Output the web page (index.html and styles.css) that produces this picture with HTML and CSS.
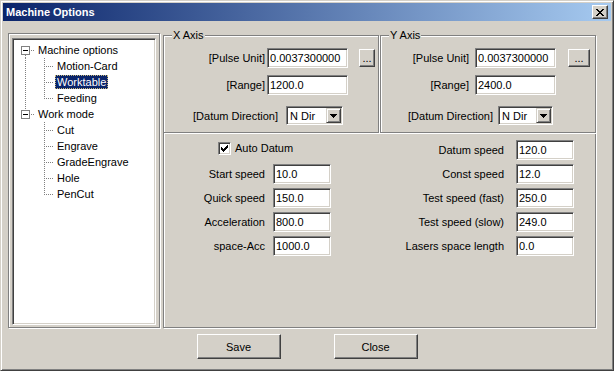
FILE: index.html
```html
<!DOCTYPE html>
<html lang="en">
<head>
    <meta charset="UTF-8">
    <title>Machine Options</title>
    <link rel="stylesheet" href="styles.css">
</head>
<body>
    <div class="window">
        <div class="titlebar">
            <span class="title">Machine Options</span>
            <span class="close-btn">
                <svg width="8" height="7" viewBox="0 0 8 7" shape-rendering="crispEdges"><path fill="#000" d="M0 0h2v1H0z M6 0h2v1H6z M1 1h2v1H1z M5 1h2v1H5z M2 2h4v1H2z M3 3h2v1H3z M2 4h4v1H2z M1 5h2v1H1z M5 5h2v1H5z M0 6h2v1H0z M6 6h2v1H6z"/></svg>
            </span>
        </div>

        <div class="content">
            <div class="main">
                <div class="tree-frame">
                    <div class="tree">
                        <div class="row">
                            <span class="cell"><span class="hl"></span><span class="vb"></span><span class="box"></span></span>
                            <span class="label">Machine options</span>
                        </div>
                        <div class="row">
                            <span class="cell"><span class="vl"></span></span>
                            <span class="cell"><span class="vl"></span><span class="hl"></span></span>
                            <span class="label">Motion-Card</span>
                        </div>
                        <div class="row">
                            <span class="cell"><span class="vl"></span></span>
                            <span class="cell"><span class="vl"></span><span class="hl"></span></span>
                            <span class="label selected">Worktable</span>
                        </div>
                        <div class="row">
                            <span class="cell"><span class="vl"></span></span>
                            <span class="cell"><span class="vt"></span><span class="hl"></span></span>
                            <span class="label">Feeding</span>
                        </div>
                        <div class="row">
                            <span class="cell"><span class="hl"></span><span class="vr"></span><span class="box"></span></span>
                            <span class="label">Work mode</span>
                        </div>
                        <div class="row">
                            <span class="cell"></span>
                            <span class="cell"><span class="vl"></span><span class="hl"></span></span>
                            <span class="label">Cut</span>
                        </div>
                        <div class="row">
                            <span class="cell"></span>
                            <span class="cell"><span class="vl"></span><span class="hl"></span></span>
                            <span class="label">Engrave</span>
                        </div>
                        <div class="row">
                            <span class="cell"></span>
                            <span class="cell"><span class="vl"></span><span class="hl"></span></span>
                            <span class="label">GradeEngrave</span>
                        </div>
                        <div class="row">
                            <span class="cell"></span>
                            <span class="cell"><span class="vl"></span><span class="hl"></span></span>
                            <span class="label">Hole</span>
                        </div>
                        <div class="row">
                            <span class="cell"></span>
                            <span class="cell"><span class="vt"></span><span class="hl"></span></span>
                            <span class="label">PenCut</span>
                        </div>
                    </div>
                </div>

                <div class="settings">
                    <div class="axes">
                        <div class="group x-axis">
                            <span class="legend">X Axis</span>
                            <div class="axis-row">
                                <span class="lbl lbl-pulse">[Pulse Unit]</span>
                                <input class="field field-pulse" type="text" value="0.0037300000">
                                <button class="btn btn-dots">...</button>
                            </div>
                            <div class="axis-row row-range">
                                <span class="lbl lbl-pulse">[Range]</span>
                                <input class="field field-pulse" type="text" value="1200.0">
                            </div>
                            <div class="axis-row row-dir">
                                <span class="lbl lbl-dir">[Datum Direction]</span>
                                <div class="combo">
                                    <span>N Dir</span>
                                    <span class="drop"><svg width="7" height="4" viewBox="0 0 7 4" shape-rendering="crispEdges"><path fill="#000" d="M0 0h7v1H0z M1 1h5v1H1z M2 2h3v1H2z M3 3h1v1H3z"/></svg></span>
                                </div>
                            </div>
                        </div>
                        <div class="group y-axis">
                            <span class="legend">Y Axis</span>
                            <div class="axis-row">
                                <span class="lbl lbl-pulse">[Pulse Unit]</span>
                                <input class="field field-pulse" type="text" value="0.0037300000">
                                <button class="btn btn-dots">...</button>
                            </div>
                            <div class="axis-row row-range">
                                <span class="lbl lbl-pulse">[Range]</span>
                                <input class="field field-pulse" type="text" value="2400.0">
                            </div>
                            <div class="axis-row row-dir">
                                <span class="lbl lbl-dir">[Datum Direction]</span>
                                <div class="combo">
                                    <span>N Dir</span>
                                    <span class="drop"><svg width="7" height="4" viewBox="0 0 7 4" shape-rendering="crispEdges"><path fill="#000" d="M0 0h7v1H0z M1 1h5v1H1z M2 2h3v1H2z M3 3h1v1H3z"/></svg></span>
                                </div>
                            </div>
                        </div>
                    </div>

                    <div class="motion">
                        <div class="auto-datum">
                            <span class="check">
                                <svg width="7" height="7" viewBox="0 0 7 7" shape-rendering="crispEdges"><path fill="#000" d="M6 0h1v1H6z M5 1h2v1H5z M0 2h1v1H0z M4 2h3v1H4z M0 3h2v1H0z M3 3h3v1H3z M0 4h5v1H0z M1 5h3v1H1z M2 6h1v1H2z"/></svg>
                            </span>
                            <span>Auto Datum</span>
                        </div>
                        <span class="lbl-r">Datum speed</span>
                        <input class="field field-num" type="text" value="120.0">

                        <span class="lbl-l">Start speed</span>
                        <input class="field field-num" type="text" value="10.0">
                        <span class="lbl-r">Const speed</span>
                        <input class="field field-num" type="text" value="12.0">

                        <span class="lbl-l">Quick speed</span>
                        <input class="field field-num" type="text" value="150.0">
                        <span class="lbl-r">Test speed (fast)</span>
                        <input class="field field-num" type="text" value="250.0">

                        <span class="lbl-l">Acceleration</span>
                        <input class="field field-num" type="text" value="800.0">
                        <span class="lbl-r">Test speed (slow)</span>
                        <input class="field field-num" type="text" value="249.0">

                        <span class="lbl-l">space-Acc</span>
                        <input class="field field-num" type="text" value="1000.0">
                        <span class="lbl-r">Lasers space length</span>
                        <input class="field field-num" type="text" value="0.0">
                    </div>
                </div>
            </div>

            <div class="actions">
                <button class="btn btn-action">Save</button>
                <button class="btn btn-action">Close</button>
            </div>
        </div>
    </div>
</body>
</html>
```

FILE: styles.css
```css
* {
    box-sizing: border-box;
}

body {
    margin: 0;
    background: #d4d0c8;
    font-family: "Liberation Sans", Arial, sans-serif;
    font-size: 11px;
    color: #000;
}

.window {
    width: 614px;
    height: 371px;
    padding: 2px;
    background: #d4d0c8;
    border: 1px solid;
    border-color: #d4d0c8 #404040 #404040 #d4d0c8;
    box-shadow: inset 1px 1px #fff, inset -1px -1px #808080;
}

.titlebar {
    height: 18px;
    display: flex;
    align-items: center;
    justify-content: space-between;
    padding: 0 3px 0 3px;
    background: linear-gradient(to right, #0a246a, #a6caf0);
}

.title {
    color: #fff;
    font-weight: bold;
    font-size: 11px;
}

.close-btn {
    width: 16px;
    height: 14px;
    display: flex;
    align-items: center;
    justify-content: center;
    background: #d4d0c8;
    border: 1px solid;
    border-color: #fff #404040 #404040 #fff;
    box-shadow: inset -1px -1px #808080;
}

.content {
    padding: 12px 5px 0 5px;
}

.main {
    display: flex;
    height: 295px;
}

/* tree */

.tree-frame {
    width: 152px;
    height: 295px;
    padding: 4px 3px 2px 3px;
    border: 1px solid #808080;
    box-shadow: inset 1px 1px #fff, 1px 1px #fff;
}

.tree {
    height: 100%;
    padding: 3px 0 0 3px;
    background: #fff;
    border: 1px solid;
    border-color: #808080 #fff #fff #808080;
    box-shadow: inset 1px 1px #404040, inset -1px -1px #d4d0c8;
}

.row {
    display: flex;
    align-items: center;
    height: 16px;
}

.cell {
    position: relative;
    flex: none;
    width: 19px;
    height: 16px;
}

.vl, .vt, .vb, .vr {
    position: absolute;
    left: 9px;
    width: 1px;
    background: repeating-linear-gradient(#808080 0 1px, transparent 1px 2px);
}

.vl {
    top: 0;
    height: 16px;
}

.vt {
    top: 0;
    height: 9px;
}

.vb {
    top: 13px;
    height: 3px;
}

.vr {
    top: 0;
    height: 4px;
}

.hl {
    position: absolute;
    left: 9px;
    top: 8px;
    width: 10px;
    height: 1px;
    background: repeating-linear-gradient(to right, #808080 0 1px, transparent 1px 2px);
}

.box {
    position: absolute;
    left: 5px;
    top: 4px;
    width: 9px;
    height: 9px;
    background: #fff;
    border: 1px solid #808080;
}

.box::after {
    content: "";
    position: absolute;
    left: 1px;
    top: 3px;
    width: 5px;
    height: 1px;
    background: #000;
}

.label {
    margin-left: 1px;
    padding: 0 2px;
    height: 14px;
    line-height: 14px;
    white-space: nowrap;
}

.label.selected {
    background: #0a246a;
    color: #fff;
    outline: 1px dotted #c8b878;
    outline-offset: -1px;
}

/* axis groups */

.settings {
    display: flex;
    flex-direction: column;
    width: 433px;
    margin: 2px 0 0 3px;
}

.axes {
    display: flex;
    gap: 1px;
}

.group {
    position: relative;
    width: 216px;
    height: 98px;
    padding-top: 12px;
    border: 1px solid #808080;
    box-shadow: inset 1px 1px #fff, 1px 1px #fff;
}

.legend {
    position: absolute;
    top: -7px;
    left: 8px;
    padding: 0 1px;
    line-height: 13px;
    background: #d4d0c8;
}

.axis-row {
    display: flex;
    align-items: center;
    height: 20px;
}

.row-range {
    margin-top: 7px;
}

.row-dir {
    margin-top: 11px;
    height: 19px;
}

.lbl {
    text-align: right;
    white-space: nowrap;
}

.x-axis .lbl-pulse {
    width: 101px;
    margin-right: 2px;
}

.x-axis .lbl-dir {
    width: 114px;
    margin-right: 8px;
}

.y-axis .lbl-pulse {
    width: 88px;
    margin-right: 6px;
}

.y-axis .lbl-dir {
    width: 112px;
    margin-right: 5px;
}

.field {
    height: 20px;
    margin: 0;
    padding: 0 2px;
    font: inherit;
    color: #000;
    background: #fff;
    border: 1px solid;
    border-color: #808080 #fff #fff #808080;
    box-shadow: inset 1px 1px #404040, inset -1px -1px #d4d0c8;
    outline: none;
}

.field-pulse {
    width: 81px;
}

.btn {
    margin: 0;
    padding: 0;
    font: inherit;
    color: #000;
    background: #d4d0c8;
    border: 1px solid;
    border-color: #fff #404040 #404040 #fff;
    box-shadow: inset -1px -1px #808080;
}

.btn-dots {
    height: 18px;
    line-height: 14px;
}

.x-axis .btn-dots {
    width: 16px;
    margin-left: 11px;
}

.y-axis .btn-dots {
    width: 22px;
    margin-left: 12px;
}

.combo {
    display: flex;
    align-items: center;
    height: 19px;
    padding: 2px 2px 2px 3px;
    background: #fff;
    border: 1px solid;
    border-color: #808080 #fff #fff #808080;
    box-shadow: inset 1px 1px #404040, inset -1px -1px #d4d0c8;
}

.x-axis .combo {
    width: 57px;
}

.y-axis .combo {
    width: 55px;
}

.drop {
    display: flex;
    align-items: center;
    justify-content: center;
    width: 15px;
    height: 15px;
    margin-left: auto;
    margin-right: -1px;
    margin-top: -1px;
    margin-bottom: -1px;
    background: #d4d0c8;
    border: 1px solid;
    border-color: #d4d0c8 #404040 #404040 #d4d0c8;
    box-shadow: inset 1px 1px #fff, inset -1px -1px #808080;
}

/* motion panel */

.motion {
    display: grid;
    grid-template-columns: 109px 58px 185px 58px;
    grid-auto-rows: 20px;
    row-gap: 4px;
    align-items: center;
    align-content: start;
    height: 196px;
    margin-top: -1px;
    padding-top: 7px;
    border: 1px solid #808080;
    box-shadow: inset 1px 1px #fff, 1px 1px #fff;
}

.auto-datum {
    grid-column: 1 / 3;
    display: flex;
    align-items: center;
    padding-left: 54px;
    margin-top: -4px;
}

.check {
    display: flex;
    align-items: center;
    justify-content: center;
    width: 13px;
    height: 13px;
    margin-right: 4px;
    background: #fff;
    border: 1px solid;
    border-color: #808080 #fff #fff #808080;
    box-shadow: inset 1px 1px #404040, inset -1px -1px #d4d0c8;
}

.lbl-l {
    padding-right: 8px;
    text-align: right;
    white-space: nowrap;
}

.lbl-r {
    padding-right: 12px;
    text-align: right;
    white-space: nowrap;
}

.field-num {
    width: 58px;
}

.actions {
    display: flex;
    justify-content: center;
    gap: 53px;
    margin-top: 6px;
}

.btn-action {
    width: 84px;
    height: 25px;
}
```
